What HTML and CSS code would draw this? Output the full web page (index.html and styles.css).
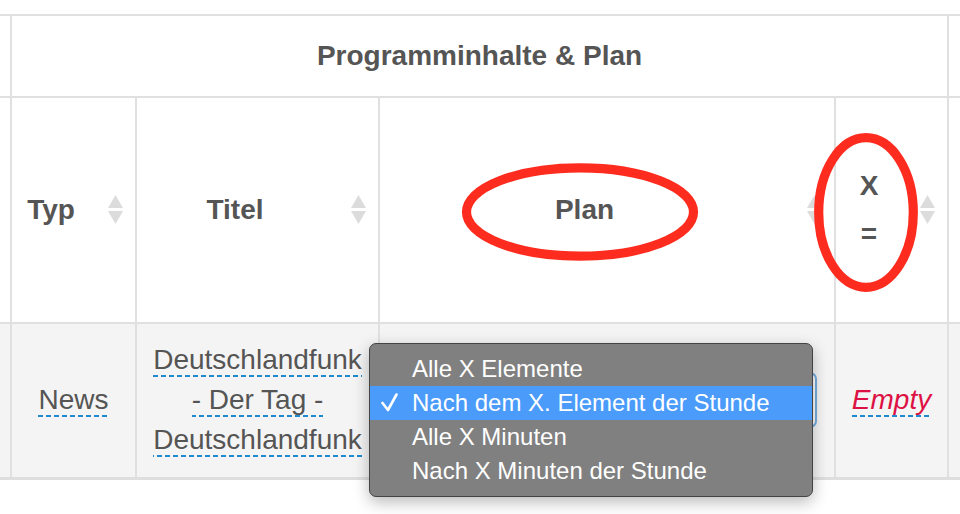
FILE: index.html
```html
<!DOCTYPE html>
<html lang="de">
<head>
<meta charset="utf-8">
<title>Programminhalte &amp; Plan</title>
<link rel="stylesheet" href="styles.css">
</head>
<body>
<div class="stage">
  <table class="grid">
    <colgroup>
      <col class="w0"><col class="w1"><col class="w2"><col class="w3"><col class="w4"><col class="w5">
    </colgroup>
    <thead>
      <tr class="group-row">
        <th class="edge-l"></th>
        <th colspan="4" class="group">Programminhalte &amp; Plan</th>
        <th class="edge-r"></th>
      </tr>
      <tr class="head-row">
        <th class="edge-l"></th>
        <th><div class="th-inner"><span class="label">Typ</span><svg class="sort" viewBox="0 0 15 30" width="15" height="30"><polygon points="7.5,0 15,13 0,13"/><polygon points="0,16 15,16 7.5,29"/></svg></div></th>
        <th><div class="th-inner"><span class="label">Titel</span><svg class="sort" viewBox="0 0 15 30" width="15" height="30"><polygon points="7.5,0 15,13 0,13"/><polygon points="0,16 15,16 7.5,29"/></svg></div></th>
        <th><div class="th-inner"><span class="label">Plan</span><svg class="sort" viewBox="0 0 15 30" width="15" height="30"><polygon points="7.5,0 15,13 0,13"/><polygon points="0,16 15,16 7.5,29"/></svg></div></th>
        <th><div class="th-inner"><span class="label"><span class="stack">X =</span></span><svg class="sort" viewBox="0 0 15 30" width="15" height="30"><polygon points="7.5,0 15,13 0,13"/><polygon points="0,16 15,16 7.5,29"/></svg></div></th>
        <th class="edge-r"></th>
      </tr>
    </thead>
    <tbody>
      <tr class="data-row">
        <td class="edge-l"></td>
        <td class="cell"><a class="editable">News</a></td>
        <td class="cell titel"><a class="editable">Deutschlandfunk - Der Tag - Deutschlandfunk</a></td>
        <td class="cell plan"><div class="select"></div></td>
        <td class="cell"><a class="editable empty">Empty</a></td>
        <td class="edge-r"></td>
      </tr>
    </tbody>
  </table>

  <ul class="menu">
    <li class="item">Alle X Elemente</li>
    <li class="item selected"><svg class="check" viewBox="0 0 17 19" width="17" height="19"><polyline points="1.5,10 7,17 15.5,1.5"/></svg>Nach dem X. Element der Stunde</li>
    <li class="item">Alle X Minuten</li>
    <li class="item">Nach X Minuten der Stunde</li>
  </ul>

  <svg class="annot" viewBox="0 0 960 514" width="960" height="514">
    <ellipse cx="580" cy="212" rx="113.5" ry="44.2"/>
    <ellipse cx="866" cy="212.5" rx="47.3" ry="74.8"/>
  </svg>
</div>
</body>
</html>
```

FILE: styles.css
```css
* { box-sizing: border-box; }
html, body { margin: 0; padding: 0; background: #fff; }
body {
  font-family: "Liberation Sans", Arial, Helvetica, sans-serif;
  color: #555;
  width: 960px;
  height: 514px;
  overflow: hidden;
}
.stage {
  position: relative;
  width: 960px;
  height: 514px;
  padding-top: 14px;
}

/* table */
.grid {
  border-collapse: collapse;
  table-layout: fixed;
  width: 960px;
}
.grid th, .grid td {
  border: 2px solid #e0e0e0;
  padding: 0;
}
.grid .edge-l { border-left: none; }
.grid .edge-r { border-right: none; }
.w0 { width: 11px; }
.w1 { width: 125px; }
.w2 { width: 243px; }
.w3 { width: 456px; }
.w4 { width: 113px; }
.w5 { width: 12px; }

.group-row th {
  height: 82px;
  font-size: 28px;
  font-weight: bold;
  text-align: center;
  vertical-align: middle;
}
.head-row th {
  height: 226px;
  font-size: 28px;
  font-weight: bold;
  line-height: 48px;
  vertical-align: middle;
}
.th-inner {
  display: flex;
  align-items: center;
  padding: 0 12px 0 10px;
}
.th-inner .label {
  flex: 1;
  text-align: center;
  margin-right: 28px;
}
.stack {
  display: inline-block;
  width: 24px;
}
.sort { flex: none; display: block; }
.sort polygon { fill: #dcdcdc; }

/* body row */
.data-row td {
  height: 155px;
  background: #f4f4f4;
  border-bottom: 3px solid #dedede;
  vertical-align: middle;
}
.grid .cell {
  font-size: 28px;
  line-height: 40px;
  text-align: center;
  padding: 0 14px;
}
.grid .plan { padding: 0 17px; }
.editable {
  color: #555;
  padding-bottom: 2px;
  background-image: repeating-linear-gradient(90deg, #2189d0 0 5px, transparent 5px 8px);
  background-size: 100% 2px;
  background-repeat: no-repeat;
  background-position: left bottom;
}
.editable.empty {
  color: #dd1144;
  font-style: italic;
}
.select {
  height: 56px;
  border: 2px solid #76ade0;
  border-radius: 7px;
  background: #fff;
}

/* popup menu */
.menu {
  position: absolute;
  left: 369px;
  top: 343px;
  width: 444px;
  margin: 0;
  padding: 8px 0;
  list-style: none;
  background: #808080;
  border: 1px solid #444;
  border-radius: 7px;
  box-shadow: 0 5px 16px rgba(0, 0, 0, 0.28);
  z-index: 2;
}
.item {
  position: relative;
  height: 34px;
  line-height: 34px;
  padding-left: 42px;
  font-size: 24px;
  color: #fff;
  white-space: nowrap;
}
.item.selected { background: #4a9bfa; }
.check {
  position: absolute;
  left: 11px;
  top: 7px;
}
.check polyline {
  fill: none;
  stroke: #fff;
  stroke-width: 2.6;
  stroke-linecap: round;
  stroke-linejoin: round;
}

/* red annotation marks */
.annot {
  position: absolute;
  left: 0;
  top: 0;
  z-index: 3;
  pointer-events: none;
}
.annot ellipse {
  fill: none;
  stroke: #fe2b1f;
  stroke-width: 9.2;
}
```
